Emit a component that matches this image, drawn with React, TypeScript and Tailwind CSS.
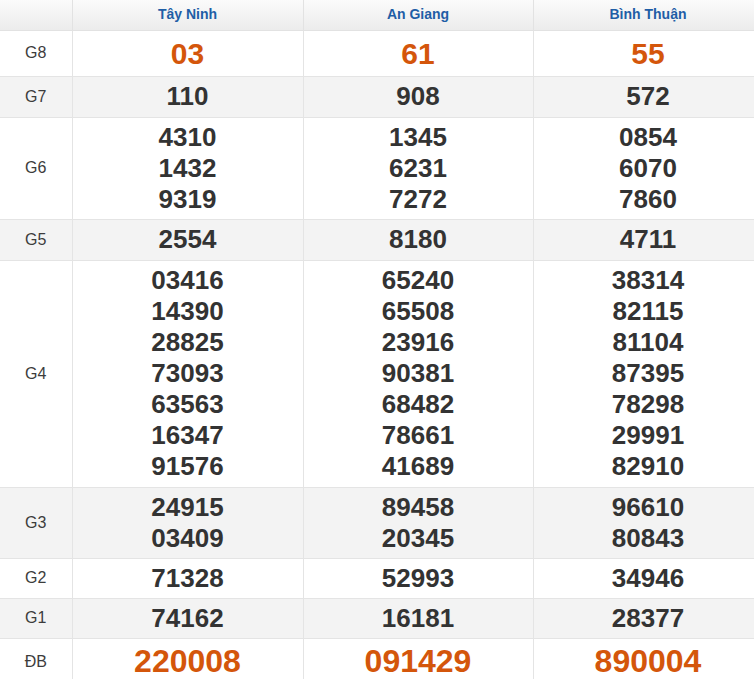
import React from "react";

type Row = { label: string; cols: string[][]; gray?: boolean; big?: "g8" | "db"; extra?: boolean };

const rows: Row[] = [
  { label: "G8", cols: [["03"], ["61"], ["55"]], big: "g8" },
  { label: "G7", cols: [["110"], ["908"], ["572"]], gray: true, extra: true },
  {
    label: "G6",
    cols: [
      ["4310", "1432", "9319"],
      ["1345", "6231", "7272"],
      ["0854", "6070", "7860"],
    ],
  },
  { label: "G5", cols: [["2554"], ["8180"], ["4711"]], gray: true, extra: true },
  {
    label: "G4",
    cols: [
      ["03416", "14390", "28825", "73093", "63563", "16347", "91576"],
      ["65240", "65508", "23916", "90381", "68482", "78661", "41689"],
      ["38314", "82115", "81104", "87395", "78298", "29991", "82910"],
    ],
    extra: true,
  },
  {
    label: "G3",
    cols: [
      ["24915", "03409"],
      ["89458", "20345"],
      ["96610", "80843"],
    ],
    gray: true,
  },
  { label: "G2", cols: [["71328"], ["52993"], ["34946"]] },
  { label: "G1", cols: [["74162"], ["16181"], ["28377"]], gray: true },
  { label: "ĐB", cols: [["220008"], ["091429"], ["890004"]], big: "db" },
];

const headers = ["Tây Ninh", "An Giang", "Bình Thuận"];

export default function App() {
  return (
    <div className="w-[754px] h-[679px] overflow-hidden bg-white font-['Liberation_Sans',Arial,sans-serif]">
      <table className="w-[763px] border-collapse table-fixed">
        <colgroup>
          <col className="w-[72px]" />
          <col className="w-[231px]" />
          <col className="w-[230px]" />
          <col className="w-[230px]" />
        </colgroup>
        <thead>
          <tr className="h-[30px] bg-gradient-to-b from-[#fbfbfb] to-[#ececec]">
            <th className="border border-[#e2e2e2] border-t-0 border-l-0"></th>
            {headers.map((h) => (
              <th
                key={h}
                className="border border-[#e2e2e2] border-t-0 text-[14px] font-bold text-[#1f5ea6] text-center leading-[29px] p-0"
              >
                {h}
              </th>
            ))}
          </tr>
        </thead>
        <tbody>
          {rows.map((r) => (
            <tr key={r.label} className={r.gray ? "bg-[#f3f3f3]" : "bg-white"}>
              <td className="border border-[#e4e4e4] border-l-0 text-center text-[16px] text-[#3c3c3c] align-middle p-0">
                {r.label}
              </td>
              {r.cols.map((c, i) => (
                <td
                  key={i}
                  className={
                    r.big === "g8"
                      ? "border border-[#e4e4e4] text-center font-bold text-[30px] leading-[37px] text-[#d4560b] pt-[4px] pb-[4px] px-0"
                      : r.big === "db"
                      ? "border border-[#e4e4e4] text-center font-bold text-[32px] leading-[40px] text-[#d4560b] pt-[2px] pb-[4px] px-0"
                      : r.extra
                      ? "border border-[#e4e4e4] text-center font-bold text-[26px] leading-[31px] text-[#333] pt-[4px] pb-[5px] px-0"
                      : "border border-[#e4e4e4] text-center font-bold text-[26px] leading-[31px] text-[#333] pt-[4px] pb-[4px] px-0"
                  }
                >
                  {c.map((n, j) => (
                    <div key={j}>{n}</div>
                  ))}
                </td>
              ))}
            </tr>
          ))}
        </tbody>
      </table>
    </div>
  );
}
